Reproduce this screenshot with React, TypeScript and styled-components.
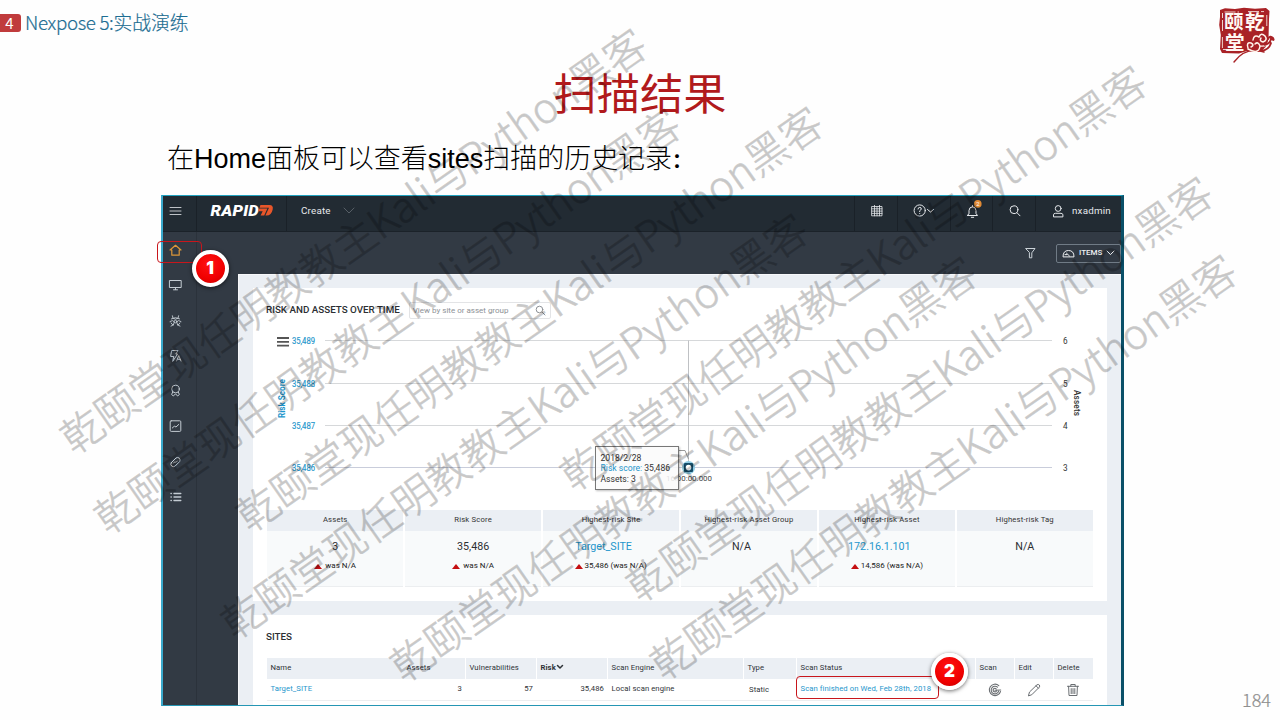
import React from 'react';
import styled, { createGlobalStyle } from 'styled-components';

const GlobalStyle = createGlobalStyle`
  * { box-sizing: border-box; }
  html, body { margin: 0; padding: 0; background: #fefefe; }
  body { width: 1280px; height: 720px; overflow: hidden; }
`;

const ui = `Roboto, "Noto Sans CJK SC", sans-serif`;

const Slide = styled.div`
  position: relative;
  width: 1280px;
  height: 720px;
  overflow: hidden;
  background: #fefefe;
  display: flex;
  flex-direction: column;
`;

const SlideHeader = styled.header`
  height: 61px;
  display: flex;
  justify-content: space-between;
  align-items: flex-start;
`;

const Chapter = styled.div`
  display: flex;
  align-items: flex-start;
  gap: 4px;
  padding-top: 14px;
  height: 32px;
`;

const ChapterNumber = styled.span`
  width: 21px;
  height: 18px;
  border-radius: 0 3px 3px 0;
  background: #c03b3c;
  color: #fff;
  font: 400 15px/17px "Noto Sans CJK SC", sans-serif;
  text-align: center;
  padding-right: 2px;
`;

const ChapterName = styled.span`
  margin-top: -2px;
  font: 300 18.8px/20px "Noto Sans CJK SC", sans-serif;
  color: #1d6d92;
  -webkit-text-stroke: 0.2px #1d6d92;
  white-space: nowrap;
`;

const LatinRun = styled.span<{ $spacing: number }>`
  letter-spacing: ${p => p.$spacing}px;
`;

const SealBox = styled.div`
  width: 63px;
  padding-top: 5px;
`;

const Title = styled.h1`
  margin: 0;
  height: 60px;
  font: 400 43.2px/60px "Noto Sans CJK SC", sans-serif;
  color: #b11a1c;
  text-align: center;
`;

const Lead = styled.p`
  margin: 0;
  height: 74px;
  padding: 18px 0 0 167px;
  font: 300 27px/40px "Liberation Sans", "Noto Sans CJK SC", sans-serif;
  color: #000;
  letter-spacing: -0.02px;
  white-space: nowrap;
`;

const Colon = styled.span`
  display: inline-block;
  font: 700 20px/30px "Noto Sans CJK SC", sans-serif;
`;

const Frame = styled.div`
  margin-left: 161px;
  width: 963px;
  height: 511px;
  border-top: 1px solid #22a3c0;
  border-left: 2px solid #3aa9cc;
  border-right: 3px solid #0a5068;
  border-bottom: 1px solid #2596b4;
  background: #323a44;
  display: flex;
  flex-direction: column;
  font-family: ${ui};
  overflow: hidden;
`;

const TopBar = styled.div`
  flex: none;
  height: 36px;
  background: #222b33;
  border-bottom: 1px solid #1b2229;
  display: flex;
`;

const TopCell = styled.div<{ $w?: number; $pad?: number }>`
  ${p => (p.$w ? `width: ${p.$w}px;` : 'flex: 1;')}
  border-right: 1px solid #1a2128;
  padding-left: ${p => p.$pad ?? 0}px;
  padding-bottom: 6px;
  display: flex;
  align-items: center;
  color: #e6e9ec;
  font-size: 9.8px;
  letter-spacing: 0.2px;
  &:last-child { border-right: 0; }
`;

const Workspace = styled.div`
  flex: 1;
  display: flex;
  min-height: 0;
`;

const SideBar = styled.nav`
  width: 34px;
  padding: 10px 0 0 5px;
  border-right: 1px solid #2b323b;
  display: flex;
  flex-direction: column;
  gap: 19.3px;
`;

const SideIcon = styled.span<{ $active?: boolean }>`
  height: 16px;
  width: 16px;
  display: flex;
  align-items: center;
  color: ${p => (p.$active ? '#dc9638' : '#c4ccd3')};
`;

const Main = styled.main`
  flex: 1;
  display: flex;
  flex-direction: column;
  padding-left: 41px;
`;

const SubBar = styled.div`
  height: 42px;
  flex: none;
  display: flex;
  align-items: center;
  justify-content: flex-end;
  gap: 20px;
  color: #ccd3d9;
`;

const ItemsButton = styled.button`
  width: 65px;
  height: 19px;
  padding: 0 0 0 5px;
  border: 1px solid #707b86;
  border-radius: 2px;
  background: transparent;
  color: #eef0f2;
  font: 500 8px/1 ${ui};
  display: flex;
  align-items: center;
  gap: 4px;
`;

const Board = styled.div`
  flex: 1;
  background: #ebeff4;
  border-top: 1px solid #f7f8fa;
  border-left: 1px solid #f7f8fa;
  padding: 13px 14px 0 14px;
  display: flex;
  flex-direction: column;
  gap: 14px;
  overflow: hidden;
`;

const Card = styled.section<{ $h: number }>`
  height: ${p => p.$h}px;
  flex: none;
  background: #fff;
  padding: 0 14px;
`;

const CardHead = styled.div`
  height: 43px;
  margin-left: -1px;
  display: flex;
  align-items: center;
  gap: 9px;
`;

const CardTitle = styled.h2`
  margin: 0;
  font: 500 9.8px/12px ${ui};
  color: #2c2f33;
  white-space: nowrap;
`;

const SearchField = styled.div`
  width: 142px;
  height: 17px;
  border: 1px solid #e3e4e6;
  border-radius: 2px;
  padding: 0 4px 0 3px;
  margin-top: 2px;
  display: flex;
  align-items: center;
  justify-content: space-between;
  font-size: 8px;
  color: #8d9196;
`;

const ChartArea = styled.div`
  position: relative;
  height: 179px;
`;

const Tooltip = styled.div`
  position: absolute;
  left: 328px;
  top: 115px;
  width: 84px;
  height: 44px;
  border: 1.5px solid #777;
  background: rgba(250, 250, 250, 0.86);
  box-shadow: 1px 1px 2px rgba(0, 0, 0, 0.25);
  padding: 5.5px 0 0 4.5px;
  font-size: 8.6px;
  line-height: 10.7px;
  color: #333;
  white-space: nowrap;
`;

const Accent = styled.span`
  color: #1e96cc;
`;

const Stats = styled.div`
  display: grid;
  grid-template-columns: repeat(6, 1fr);
  column-gap: 1.5px;
  width: 826px;
`;

const Stat = styled.div`
  height: 77px;
  background: #f8fafb;
  border-bottom: 1px solid #eceef0;
  display: flex;
  flex-direction: column;
  align-items: center;
`;

const StatHead = styled.div`
  width: 100%;
  height: 21px;
  background: #ebeff4;
  text-align: center;
  font-size: 7.7px;
  line-height: 20px;
  color: #333;
  letter-spacing: 0.17px;
`;

const StatValue = styled.div<{ $link?: boolean; $inset?: number }>`
  padding-top: 9px;
  padding-right: ${p => p.$inset ?? 0}px;
  font-size: 10.7px;
  line-height: 14px;
  color: ${p => (p.$link ? '#1e96cc' : '#2c2f33')};
`;

const StatDelta = styled.div<{ $gap: number }>`
  padding-top: 7px;
  display: flex;
  align-items: center;
  gap: ${p => p.$gap}px;
  font-size: 8px;
  line-height: 10px;
  color: #222;
`;

const UpMark = styled.span`
  border: 4px solid transparent;
  border-top: 0;
  border-bottom: 5px solid #c40f12;
`;

const Table = styled.div`
  width: 826px;
`;

const Row = styled.div<{ $head?: boolean }>`
  display: grid;
  grid-template-columns: 136px 63px 71px 71px 136px 53px 179px 39px 39px 39px;
  height: ${p => (p.$head ? 21 : 22)}px;
  background: ${p => (p.$head ? '#ebeff4' : '#fff')};
  border-bottom: ${p => (p.$head ? '0' : '1px solid #eceef0')};
`;

const Cell = styled.div<{ $head?: boolean; $right?: boolean; $link?: boolean; $icon?: boolean; $bold?: boolean; $line?: boolean; $pad?: number; $drop?: number }>`
  display: flex;
  align-items: center;
  justify-content: ${p => (p.$right ? 'flex-end' : 'flex-start')};
  padding: ${p => p.$drop ?? 0}px 4px 3px ${p => p.$pad ?? 3.5}px;
  border-right: ${p => (p.$line ? '1.5px solid #fff' : '0')};
  font-size: 7.7px;
  font-weight: ${p => (p.$bold ? 700 : 400)};
  letter-spacing: 0.08px;
  color: ${p => (p.$link ? '#1e96cc' : p.$icon ? '#6a6e72' : '#2f3338')};
  white-space: nowrap;
`;

const PageNumber = styled.div`
  position: absolute;
  right: 9px;
  bottom: 10px;
  font: 300 18px/22px "Noto Sans CJK SC", sans-serif;
  color: #8f8f8f;
  -webkit-text-stroke: 0.2px #8f8f8f;
`;

const HighlightBox = styled.div<{ $x: number; $y: number; $w: number; $h: number }>`
  position: absolute;
  left: ${p => p.$x}px;
  top: ${p => p.$y}px;
  width: ${p => p.$w}px;
  height: ${p => p.$h}px;
  border: 1px solid #c8161c;
  border-radius: 4px;
`;

const Callout = styled.div<{ $x: number; $y: number }>`
  position: absolute;
  left: ${p => p.$x - 18.5}px;
  top: ${p => p.$y - 18.5}px;
  width: 37px;
  height: 37px;
  border-radius: 50%;
  border: 4px solid #fff;
  background: radial-gradient(circle at 45% 35%, #ff1212 0%, #f00000 60%, #c00000 100%);
  box-shadow: 0 1px 4px rgba(0, 0, 0, 0.6);
  color: #fff;
  font: 900 17px/28px Inter, sans-serif;
  text-align: center;
`;

const WatermarkLayer = styled.div`
  position: absolute;
  inset: 0;
  opacity: 0.21;
  pointer-events: none;
`;

const Watermark = styled.span<{ $x: number; $y: number }>`
  position: absolute;
  left: ${p => p.$x}px;
  top: ${p => p.$y}px;
  transform: translate(-50%, -50%) rotate(-35deg);
  font: 300 41.6px/50px "Noto Sans CJK SC", sans-serif;
  color: #000;
  -webkit-text-stroke: 0.6px #000;
  white-space: nowrap;
`;

type GlyphProps = { w: number; h: number; sw?: number; children: React.ReactNode };
const Glyph = ({ w, h, sw = 1, children }: GlyphProps) => (
  <svg width={w} height={h} viewBox={`0 0 ${w} ${h}`} fill="none" stroke="currentColor" strokeWidth={sw} strokeLinecap="round" strokeLinejoin="round">
    {children}
  </svg>
);

const Seal = () => (
  <svg width="60" height="60" viewBox="0 0 60 60">
    <path d="M3 5 L8 3.2 L18 4 L27 2.8 L38 3.8 L49 3 L52.5 6 L52 14 L51.5 34 Q50 44 42 47 L30 46 L22 48.5 L5 48 L3 44 L3.8 30 L2.2 20 L3 12 Z" fill="#a92226" />
    <path d="M5.5 26 V7 H22 M31 6.6 H47 M5.4 32 V44.5 H14 M49.8 10 V22" fill="none" stroke="#f6e6e0" strokeWidth="0.9" strokeDasharray="11 2 5 3" />
    <g fill="#fff8f3" fontFamily="'Noto Sans CJK SC', sans-serif" fontWeight="700" fontSize="19.5">
      <text x="7" y="24">颐</text>
      <text x="28" y="24">乾</text>
      <text x="8" y="44.5">堂</text>
    </g>
    <g fill="none" strokeLinecap="round">
      <path d="M47 47 Q29 41 17 57" stroke="#a92226" strokeWidth="1.4" />
      <path d="M31 43 Q29 37 34 38 Q38 40 34 42 M31 44 Q42 50 43 41 Q41 36 38 39 M36 35 Q37 29 42 32 Q44 27 48 31 Q51 35 46 37 Q42 36 44 33 M43 41 Q52 42 52 35" stroke="#fff3ea" strokeWidth="1.5" />
      <path d="M48 40 Q54 38 54 33 Q58 37 56 33 Q53 30 51 34 M44 46 Q52 45 54 38" stroke="#a92226" strokeWidth="1.8" />
    </g>
  </svg>
);

const RapidLogo = () => (
  <svg width="66" height="16" viewBox="0 0 66 16">
    <text x="1.5" y="12.5" fill="#fff" fontFamily="Roboto, sans-serif" fontStyle="italic" fontWeight="900" fontSize="14" textLength="48.5" lengthAdjust="spacingAndGlyphs">RAPID</text>
    <path d="M51.4 2 H60.5 Q64.6 2.2 63.7 6.4 Q62.4 12.4 57.6 12.5 H56.4 L60 4.7 H50.6 Z" fill="#e8562a" />
    <path d="M50.2 5.6 H58.4 L55.2 12.5 H51.6 L53.7 8.3 H49.4 Z" fill="#e8562a" />
  </svg>
);

const sideIcons: React.ReactNode[] = [
  <Glyph w={15} h={14} sw={1.2}><path d="M2 7 L7.5 2.3 L13 7 H11.2 V12.2 H3.8 V7 Z" /></Glyph>,
  <Glyph w={15} h={14}><path d="M1.8 2.5 H13.2 V9.5 H1.8 Z M5.5 11.8 H9.5 M7.5 9.5 V11.5" /></Glyph>,
  <Glyph w={15} h={14} sw={0.9}>
    <circle cx="7.5" cy="7.6" r="1.3" />
    <path d="M4.3 1.8 Q4 5 7.5 5.2 Q11 5 10.7 1.8 M2 7.5 Q4.8 5.4 6.3 7.8 Q6.4 11.8 3 12.2 M13 7.5 Q10.2 5.4 8.7 7.8 Q8.6 11.8 12 12.2 M3.4 4.8 Q7.5 2.4 11.6 4.8 M3 9 Q3.4 10.6 5.6 11 M12 9 Q11.6 10.6 9.4 11" />
  </Glyph>,
  <Glyph w={15} h={14} sw={0.9}><path d="M4 1.5 H10 L7.8 5 H9.6 L4.6 12.5 L5.8 7.5 H3 Z M8.6 12 L10.8 6.5 L13 12 M9.4 10.3 H12.3" /></Glyph>,
  <Glyph w={15} h={14}><circle cx="7.5" cy="5" r="3.8" /><path d="M4.8 8 L3.6 10.5 L5.4 12 L7.5 9.8 L9.6 12 L11.4 10.5 L10.2 8" /></Glyph>,
  <Glyph w={15} h={14}><rect x="2.2" y="1.8" width="10.6" height="10.6" rx="1" /><path d="M4.3 9 L6.3 7.2 L8 8 L10.8 5.4" /></Glyph>,
  <Glyph w={15} h={14}><path d="M3.2 7.8 L8 3 Q9.4 1.8 11.4 3.2 Q12.8 5 11.6 6.6 L7 11.2 Q5.4 12.3 3.6 11 Q2.2 9.6 3.2 7.8 Z M5.6 8 Q6.6 6.2 7.4 7.2 Q8.4 7.6 9.4 6" /></Glyph>,
  <Glyph w={15} h={14} sw={1.4}><path d="M3 3.5 H3.3 M6 3.5 H12.8 M3 7 H3.3 M6 7 H12.8 M3 10.5 H3.3 M6 10.5 H12.8" /></Glyph>,
];

const stats = [
  { head: 'Assets', value: '3', delta: 'was N/A', gap: 3 },
  { head: 'Risk Score', value: '35,486', delta: 'was N/A', gap: 3 },
  { head: 'Highest-risk Site', value: 'Target_SITE', link: true, inset: 15, delta: '35,486 (was N/A)', gap: 1 },
  { head: 'Highest-risk Asset Group', value: 'N/A', inset: 15 },
  { head: 'Highest-risk Asset', value: '172.16.1.101', link: true, inset: 15, delta: '14,586 (was N/A)', gap: 2 },
  { head: 'Highest-risk Tag', value: 'N/A' },
];

const watermarks = [
  [352, 239], [386, 319], [528, 317], [513, 424],
  [852, 276], [682, 467], [918, 387], [942, 465],
];

const gridLines = [
  { y: 9.5, risk: '35,489', assets: '6' },
  { y: 52.5, risk: '35,488', assets: '5' },
  { y: 94.5, risk: '35,487', assets: '4' },
  { y: 136.5, risk: '35,486', assets: '3' },
];

const Chart = () => (
  <svg width="826" height="179" viewBox="0 0 826 179" fontFamily="Roboto, sans-serif">
    <path d="M10 7 H22 M10 10.8 H22 M10 14.6 H22" stroke="#555" strokeWidth="1.8" />
    {gridLines.map(g => (
      <g key={g.risk}>
        <line x1="58" x2="785" y1={g.y} y2={g.y} stroke={g.assets === '3' ? '#c9cddb' : '#d6d8da'} />
        <text x="48" y={g.y + 3.4} textAnchor="end" fontSize="8.2" fill="#1e96cc" stroke="#1e96cc" strokeWidth="0.15" textLength="23" lengthAdjust="spacingAndGlyphs">{g.risk}</text>
        <text x="796" y={g.y + 3} fontSize="8.2" fill="#333">{g.assets}</text>
      </g>
    ))}
    <line x1="421.5" x2="421.5" y1="9.5" y2="137" stroke="#bfc1c4" />
    <path d="M411 119.5 H418 L421.5 128" stroke="#999" fill="none" />
    <text transform="translate(17.5 87) rotate(-90)" fontSize="8.2" fontWeight="700" fill="#1e96cc" textLength="39">Risk Score</text>
    <text transform="translate(806.5 59) rotate(90)" fontSize="8.2" fontWeight="500" fill="#333" textLength="26">Assets</text>
    <text x="399" y="150" fontSize="7.8" fill="#444" textLength="46" lengthAdjust="spacingAndGlyphs">16:00:00.000</text>
    <circle cx="421.5" cy="136.6" r="6.6" fill="#8fcbe2" />
    <rect x="417" y="132" width="9" height="9" rx="1" fill="#164d68" />
    <circle cx="421.5" cy="136.6" r="2.8" fill="#fff" />
  </svg>
);

export default function App() {
  return (
    <Slide>
      <GlobalStyle />
      <SlideHeader>
        <Chapter>
          <ChapterNumber>4</ChapterNumber>
          <ChapterName><LatinRun $spacing={-0.35}>Nexpose 5:</LatinRun>实战演练</ChapterName>
        </Chapter>
        <SealBox><Seal /></SealBox>
      </SlideHeader>
      <Title>扫描结果</Title>
      <Lead>在Home面板可以查看sites扫描的历史记录<Colon>：</Colon></Lead>

      <Frame>
        <TopBar>
          <TopCell $w={34} $pad={6}>
            <Glyph w={13} h={10}><path d="M1 1.5 H12 M1 5 H12 M1 8.5 H12" opacity="0.8" /></Glyph>
          </TopCell>
          <TopCell $w={90} $pad={12}><RapidLogo /></TopCell>
          <TopCell $pad={14}>
            <span style={{ marginRight: 12 }}>Create</span>
            <Glyph w={12} h={7} sw={0.8}><path d="M1 1 L6 6 L11 1" opacity="0.35" /></Glyph>
          </TopCell>
          <TopCell $w={43} $pad={15}>
            <Glyph w={14} h={13} sw={0.8}><path d="M2 2.5 H12 V11.8 H2 Z M2 4.8 H12 M2 7.1 H12 M2 9.4 H12 M4.5 1.4 V11.8 M7 2.5 V11.8 M9.5 1.4 V11.8" /></Glyph>
          </TopCell>
          <TopCell $w={53} $pad={15}>
            <Glyph w={23} h={13}>
              <circle cx="6.7" cy="6.5" r="5.6" />
              <path d="M5 5 Q5 3.4 6.8 3.4 Q8.5 3.5 8.3 5 Q8 6 6.7 6.8 V7.6 M6.7 9.4 V9.5 M14.5 5.5 L17.5 8 L20.5 5.5" />
            </Glyph>
          </TopCell>
          <TopCell $w={42} $pad={14}>
            <Glyph w={18} h={22}>
              <path d="M2.5 15.5 H12.5 L11 13.5 V10.5 Q10.8 7 7.5 6.8 Q4.2 7 4 10.5 V13.5 Z M6.3 17.3 H8.7 M7.5 5.5 V6.8" />
              <circle cx="12.8" cy="3.9" r="3.8" fill="#e08a35" stroke="none" />
              <text x="11.2" y="6" fontSize="5.8" fill="#fff" stroke="none" fontFamily="Roboto, sans-serif">2</text>
            </Glyph>
          </TopCell>
          <TopCell $w={43} $pad={15}>
            <Glyph w={14} h={13}><circle cx="6" cy="5.7" r="3.9" /><path d="M8.9 8.6 L12 11.8" /></Glyph>
          </TopCell>
          <TopCell $w={85} $pad={16}>
            <span style={{ marginRight: 7, display: 'flex' }}>
              <Glyph w={13} h={14}><circle cx="6.2" cy="4.5" r="2.9" /><path d="M1.5 12.5 V10.8 Q1.7 9.3 3.4 9.3 H9 Q10.7 9.3 10.9 10.8 V12.5 Z" /></Glyph>
            </span>
            nxadmin
          </TopCell>
        </TopBar>

        <Workspace>
          <SideBar>
            {sideIcons.map((icon, i) => <SideIcon key={i} $active={i === 0}>{icon}</SideIcon>)}
          </SideBar>
          <Main>
            <SubBar>
              <Glyph w={11} h={12}><path d="M1 1.5 H10 L6.8 5.8 V10.8 H4.4 V5.8 Z" /></Glyph>
              <ItemsButton>
                <Glyph w={13} h={9}><path d="M1 7.5 Q1 1.5 6.5 1.5 Q12 1.5 12 7.5 Z M4.5 4.2 L7.5 7 M3 5.6 H5" /></Glyph>
                ITEMS
                <Glyph w={9} h={6}><path d="M1 1 L4.5 4.6 L8 1" /></Glyph>
              </ItemsButton>
            </SubBar>
            <Board>
              <Card $h={313}>
                <CardHead>
                  <CardTitle>RISK AND ASSETS OVER TIME</CardTitle>
                  <SearchField>
                    View by site or asset group
                    <Glyph w={11} h={11}><circle cx="4.5" cy="4.5" r="3.3" /><path d="M7 7 L10 10" /></Glyph>
                  </SearchField>
                </CardHead>
                <ChartArea>
                  <Chart />
                  <Tooltip>
                    2018/2/28<br />
                    <Accent>Risk score:</Accent> 35,486<br />
                    Assets: 3
                  </Tooltip>
                </ChartArea>
                <Stats>
                  {stats.map(s => (
                    <Stat key={s.head}>
                      <StatHead>{s.head}</StatHead>
                      <StatValue $link={s.link} $inset={s.inset}>{s.value}</StatValue>
                      {s.delta && <StatDelta $gap={s.gap ?? 2}><UpMark />{s.delta}</StatDelta>}
                    </Stat>
                  ))}
                </Stats>
              </Card>
              <Card $h={120}>
                <CardHead><CardTitle>SITES</CardTitle></CardHead>
                <Table>
                  <Row $head>
                    <Cell $head>Name</Cell>
                    <Cell $head $line>Assets</Cell>
                    <Cell $head $line>Vulnerabilities</Cell>
                    <Cell $head $line $bold>
                      Risk<Glyph w={8} h={6} sw={1.5}><path d="M1.5 1.5 L4 4 L6.5 1.5" /></Glyph>
                    </Cell>
                    <Cell $head $line>Scan Engine</Cell>
                    <Cell $head $line>Type</Cell>
                    <Cell $head $line>Scan Status</Cell>
                    <Cell $head $line>Scan</Cell>
                    <Cell $head $line>Edit</Cell>
                    <Cell $head>Delete</Cell>
                  </Row>
                  <Row>
                    <Cell $link>Target_SITE</Cell>
                    <Cell $right>3</Cell>
                    <Cell $right>57</Cell>
                    <Cell $right>35,486</Cell>
                    <Cell>Local scan engine</Cell>
                    <Cell $pad={5} $drop={3}>Static</Cell>
                    <Cell $link>Scan finished on Wed, Feb 28th, 2018</Cell>
                    <Cell $icon $pad={12} $drop={3}>
                      <Glyph w={14} h={14} sw={1.1}>
                        <path d="M10.8 2.6 A5.7 5.7 0 1 0 12.5 8.5 M9.5 4.2 A3.8 3.8 0 1 0 10.6 8.3 M8.2 5.8 A1.8 1.8 0 1 0 8.5 8 M7 7.2 L12.7 7" />
                      </Glyph>
                    </Cell>
                    <Cell $icon $pad={12} $drop={3}>
                      <Glyph w={14} h={14}><path d="M1.5 12.5 L2.5 9 L10 1.8 Q11.4 1 12.3 2 Q13.2 3 12.3 4.2 L5 11.5 Z M9 2.8 L11.4 5.2" /></Glyph>
                    </Cell>
                    <Cell $icon $pad={12} $drop={3}>
                      <Glyph w={14} h={14}><path d="M1.5 3.3 H12.5 M4.8 3.3 V1.5 H9.2 V3.3 M2.6 3.3 L3 12.5 H11 L11.4 3.3 M5.2 5.6 V10.6 M7 5.6 V10.6 M8.8 5.6 V10.6" /></Glyph>
                    </Cell>
                  </Row>
                </Table>
              </Card>
            </Board>
          </Main>
        </Workspace>
      </Frame>

      <PageNumber>184</PageNumber>
      <WatermarkLayer>
        {watermarks.map(([x, y]) => (
          <Watermark key={`${x}-${y}`} $x={x} $y={y}>乾颐堂现任明教教主Kali与Python黑客</Watermark>
        ))}
      </WatermarkLayer>
      <HighlightBox $x={157} $y={241} $w={45} $h={22} />
      <HighlightBox $x={796} $y={676} $w={143} $h={23} />
      <Callout $x={210} $y={268}>1</Callout>
      <Callout $x={949.5} $y={671}>2</Callout>
    </Slide>
  );
}
